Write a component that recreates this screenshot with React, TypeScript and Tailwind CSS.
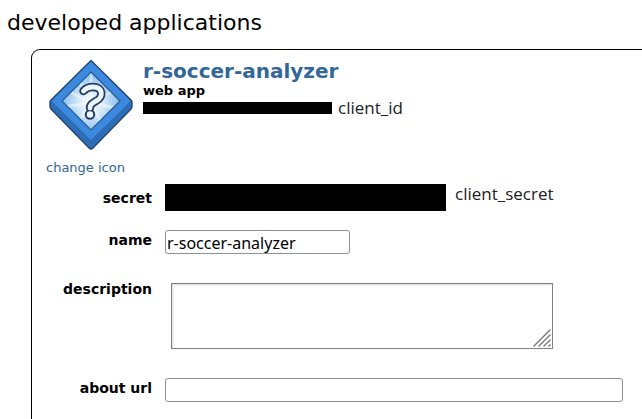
import type { ReactNode } from 'react';

function AppIcon() {
  return (
    <svg width="84" height="92" viewBox="0 0 84 92" role="img" aria-label="app icon">
      <defs>
        <radialGradient id="glow" gradientUnits="userSpaceOnUse" cx="42" cy="44" r="28">
          <stop offset="0" stopColor="#ffffff" />
          <stop offset="0.45" stopColor="#d4e9fa" />
          <stop offset="1" stopColor="#8fc1ee" />
        </radialGradient>
        <clipPath id="face">
          <path d="M42 13 L71 42 L42 71 L13 42Z" />
        </clipPath>
      </defs>
      <path d="M42 1.5 L82 41 Q83 42 83 43 V47 Q83 49 82 50 L44 89 Q42 91 40 89 L2 50 Q1 49 1 47 V43 Q1 42 2 41Z" fill="#2c6db6" stroke="#24486f" strokeWidth="1.4" />
      <path d="M42 2.5 L81.5 42 L42 81 L2.5 42Z" fill="#3b8ae0" />
      <path d="M42 13 L71 42 L42 71 L13 42Z" fill="url(#glow)" />
      <g clipPath="url(#face)" stroke="#ffffff" strokeWidth="3" opacity="0.45">
        <path d="M42 44 L16 30 M42 44 L13 48 M42 44 L26 68 M42 44 L42 12 M42 44 L68 30 M42 44 L72 50 M42 44 L56 70 M42 44 L28 18" />
      </g>
      <path d="M42 13 L71 42 L42 71 L13 42Z" fill="none" stroke="#27588d" strokeWidth="1.2" />
      <path d="M34.5 32 C37 29 41 28 44 28 C54 28 55 38 47 42 C42 45 41 46 41 49" fill="none" stroke="#233f66" strokeWidth="8.4" strokeLinecap="round" strokeLinejoin="round" />
      <circle cx="41" cy="55.5" r="5.2" fill="#233f66" />
      <path d="M34.5 32 C37 29 41 28 44 28 C54 28 55 38 47 42 C42 45 41 46 41 49" fill="none" stroke="#edf6fd" strokeWidth="4.8" strokeLinecap="round" strokeLinejoin="round" />
      <circle cx="41" cy="55.5" r="3.2" fill="#edf6fd" />
    </svg>
  );
}

function Row({ id, label, className, children }: { id: string; label: string; className: string; children: ReactNode }) {
  return (
    <div className={`flex gap-[13px] ${className}`}>
      <label htmlFor={id} className="w-[120px] shrink-0 text-right text-sm font-bold leading-5">
        {label}
      </label>
      {children}
    </div>
  );
}

const field = 'h-6 rounded-[3px] border border-[#8f8f9d] bg-white px-px pt-0.5 font-["Noto_Sans",sans-serif] text-base leading-5 outline-none';
const note = 'font-["Open_Sans",sans-serif] text-[17px] leading-5 text-[#222]';

export default function App() {
  return (
    <main className='flex min-h-screen flex-col overflow-hidden bg-white font-["DejaVu_Sans",sans-serif] text-black'>
      <h1 className="px-[7px] pt-2 pb-[11px] text-[22px] leading-[30px]">developed applications</h1>
      <section className="ml-[31px] grow rounded-tl-[9px] border-t border-l border-black">
        <div className="flex gap-2.5 pt-[9px] pl-[14px]">
          <div className="flex w-[87px] shrink-0 flex-col items-end">
            <AppIcon />
            <a href="#icon" className="mt-[7px] self-start whitespace-nowrap text-[13px] leading-5 text-[#336699]">change icon</a>
          </div>
          <div>
            <h2 className="text-xl leading-6 font-bold text-[#336699]">
              <a href="#app">r-soccer-analyzer</a>
            </h2>
            <p className="text-[13px] leading-4 font-bold">web app</p>
            <div className="-mt-px flex items-center gap-1.5">
              <span className="h-3 w-[189px] bg-black" />
              <span className={note}>client_id</span>
            </div>
          </div>
        </div>
        <form>
          <Row id="secret" label="secret" className="items-center pt-1.5">
            <output id="secret" className="h-[27px] w-[281px] shrink-0 bg-black" />
            <span className={`-ml-1 self-start ${note}`}>client_secret</span>
          </Row>
          <Row id="name" label="name" className="items-start pt-[19px]">
            <input id="name" type="text" defaultValue="r-soccer-analyzer" className={`w-[185px] ${field}`} />
          </Row>
          <Row id="description" label="description" className="items-start pt-[25px]">
            <div className="relative ml-1.5 mt-1 h-[66px] w-[382px]">
              <textarea id="description" className="block h-full w-full resize-none border border-[#808080] bg-white p-1 shadow-[inset_1px_1px_2px_#d8d8d8] outline-none" />
              <svg width="18" height="18" viewBox="0 0 18 18" className="pointer-events-none absolute right-0.5 bottom-0.5" aria-hidden="true">
                <path d="M0.5 17.5 L17.5 0.5 M5.5 17.5 L17.5 5.5 M10.5 17.5 L17.5 10.5 M15.5 17.5 L17.5 15.5" stroke="#777" strokeWidth="1.4" />
              </svg>
            </div>
          </Row>
          <Row id="about" label="about url" className="items-start pt-[29px]">
            <input id="about" type="url" className={`w-[458px] ${field}`} />
          </Row>
        </form>
      </section>
    </main>
  );
}
